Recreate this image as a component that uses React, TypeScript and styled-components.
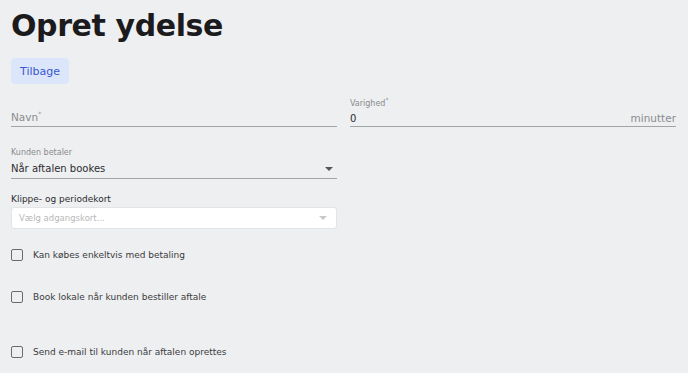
import React from 'react';
import styled, { createGlobalStyle } from 'styled-components';

const GlobalStyle = createGlobalStyle`
  html, body {
    margin: 0;
    padding: 0;
    background: #eeeff1;
    font-family: "DejaVu Sans", "Noto Sans", sans-serif;
  }
`;

const Page = styled.div`
  width: 688px;
  height: 373px;
  box-sizing: border-box;
  padding: 6px 12px 0 11px;
  overflow: hidden;
`;

const Title = styled.h1`
  margin: 0;
  font-size: 30px;
  font-weight: 700;
  color: #1b1b1d;
  letter-spacing: -0.4px;
  line-height: 40px;
`;

const BackButton = styled.button`
  margin-top: 12px;
  height: 26px;
  padding: 0 9px;
  border: none;
  border-radius: 4px;
  background: #dce6fb;
  color: #3a58d0;
  font-family: inherit;
  font-size: 11px;
  font-weight: 500;
`;

const Row = styled.div`
  display: grid;
  grid-template-columns: 326px 326px;
  column-gap: 13px;
  margin-top: 12px;
`;

const Field = styled.div`
  display: flex;
  flex-direction: column;
  justify-content: flex-end;
  height: 30px;
  border-bottom: 1px solid #a3a4a6;
`;

const SmallLabel = styled.div`
  font-size: 8px;
  color: #8a8b8e;
  line-height: 10px;
  margin-bottom: 3px;
`;

const Star = styled.sup`
  font-size: 6px;
`;

const InputLine = styled.div<{ muted?: boolean }>`
  display: flex;
  align-items: center;
  justify-content: space-between;
  height: 16px;
  padding-bottom: 2px;
  font-size: ${(p) => (p.muted ? '10.5px' : '10px')};
  color: ${(p) => (p.muted ? '#8b8c8f' : '#2b2c2e')};
`;

const Unit = styled.span`
  color: #8b8c8f;
  font-size: 10.5px;
`;

const Caret = styled.span<{ light?: boolean }>`
  width: 0;
  height: 0;
  border-left: 4px solid transparent;
  border-right: 4px solid transparent;
  border-top: 4px solid ${(p) => (p.light ? '#c8c9cb' : '#555659')};
  margin-right: ${(p) => (p.light ? '9px' : '4px')};
`;

const SelectRow = styled.div`
  width: 326px;
  margin-top: 21px;
`;

const CardLabel = styled.div`
  width: 326px;
  margin-top: 15px;
  font-size: 9px;
  color: #2b2c2e;
`;

const CardSelect = styled.div`
  width: 326px;
  height: 22px;
  margin-top: 3px;
  box-sizing: border-box;
  display: flex;
  align-items: center;
  justify-content: space-between;
  padding-left: 7px;
  background: #ffffff;
  border: 1px solid #e3e4e6;
  border-radius: 3px;
  font-size: 8.5px;
  color: #b7b8ba;
`;

const CheckRow = styled.label<{ gap: number }>`
  display: flex;
  align-items: center;
  gap: 10px;
  height: 14px;
  margin-top: ${(p) => p.gap}px;
  font-size: 9px;
  color: #3a3b3d;
`;

const Box = styled.span`
  width: 10px;
  height: 10px;
  border: 1.5px solid #6a6b6e;
  border-radius: 2px;
`;

const checks = [
  { text: 'Kan købes enkeltvis med betaling', gap: 19 },
  { text: 'Book lokale når kunden bestiller aftale', gap: 28 },
  { text: 'Send e-mail til kunden når aftalen oprettes', gap: 41 },
];

const App = () => (
  <>
    <GlobalStyle />
    <Page>
      <Title>Opret ydelse</Title>
      <BackButton>Tilbage</BackButton>
      <Row>
        <Field>
          <InputLine muted>
            <span>
              Navn<Star>*</Star>
            </span>
          </InputLine>
        </Field>
        <Field>
          <SmallLabel>
            Varighed<Star>*</Star>
          </SmallLabel>
          <InputLine>
            <span>0</span>
            <Unit>minutter</Unit>
          </InputLine>
        </Field>
      </Row>
      <SelectRow>
        <Field>
          <SmallLabel>Kunden betaler</SmallLabel>
          <InputLine>
            <span>Når aftalen bookes</span>
            <Caret />
          </InputLine>
        </Field>
      </SelectRow>
      <CardLabel>Klippe- og periodekort</CardLabel>
      <CardSelect>
        <span>Vælg adgangskort...</span>
        <Caret light />
      </CardSelect>
      {checks.map((c) => (
        <CheckRow key={c.text} gap={c.gap}>
          <Box />
          {c.text}
        </CheckRow>
      ))}
    </Page>
  </>
);

export default App;
